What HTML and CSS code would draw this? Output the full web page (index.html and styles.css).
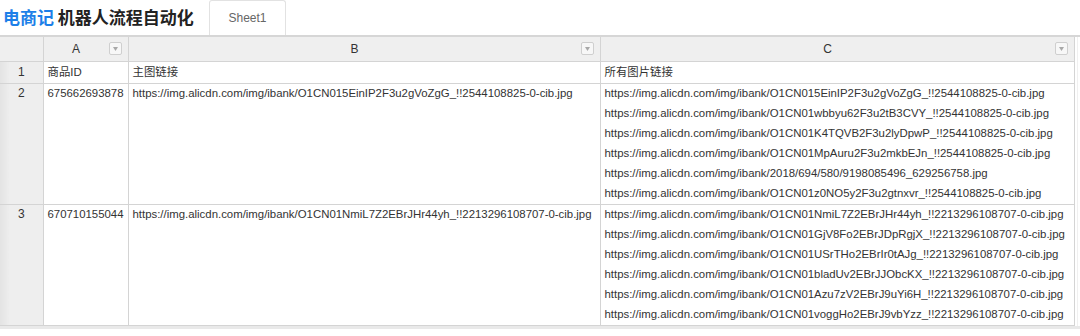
FILE: index.html
```html
<!DOCTYPE html>
<html lang="zh">
<head>
<meta charset="utf-8">
<link rel="stylesheet" href="styles.css">
</head>
<body>
<div class="topbar">
  <div class="brand"><span class="brand-blue">电商记</span> 机器人流程自动化</div>
  <div class="tab">Sheet1</div>
</div>
<div class="sheet">
  <table class="grid">
    <colgroup>
      <col class="c-num"><col class="c-a"><col class="c-b"><col class="c-c">
    </colgroup>
    <thead>
      <tr class="hdr">
        <th class="corner"></th>
        <th><div class="hcell"><span class="hlabel">A</span><span class="fbtn"><svg width="5" height="4" viewBox="0 0 5 4"><path d="M0 0H5L2.5 4Z" fill="#a8a8a8"/></svg></span></div></th>
        <th><div class="hcell"><span class="hlabel">B</span><span class="fbtn"><svg width="5" height="4" viewBox="0 0 5 4"><path d="M0 0H5L2.5 4Z" fill="#a8a8a8"/></svg></span></div></th>
        <th><div class="hcell"><span class="hlabel">C</span><span class="fbtn"><svg width="5" height="4" viewBox="0 0 5 4"><path d="M0 0H5L2.5 4Z" fill="#a8a8a8"/></svg></span></div></th>
      </tr>
    </thead>
    <tbody>
      <tr class="r1">
        <td class="num"><div class="cv">1</div></td>
        <td><div class="cv">商品ID</div></td>
        <td><div class="cv">主图链接</div></td>
        <td><div class="cv">所有图片链接</div></td>
      </tr>
      <tr class="rbig">
        <td class="num"><div class="cv">2</div></td>
        <td><div class="cv">675662693878</div></td>
        <td><div class="cv">https://img.alicdn.com/img/ibank/O1CN015EinIP2F3u2gVoZgG_!!2544108825-0-cib.jpg</div></td>
        <td><div class="cv">https://img.alicdn.com/img/ibank/O1CN015EinIP2F3u2gVoZgG_!!2544108825-0-cib.jpg<br>https://img.alicdn.com/img/ibank/O1CN01wbbyu62F3u2tB3CVY_!!2544108825-0-cib.jpg<br>https://img.alicdn.com/img/ibank/O1CN01K4TQVB2F3u2lyDpwP_!!2544108825-0-cib.jpg<br>https://img.alicdn.com/img/ibank/O1CN01MpAuru2F3u2mkbEJn_!!2544108825-0-cib.jpg<br>https://img.alicdn.com/img/ibank/2018/694/580/9198085496_629256758.jpg<br>https://img.alicdn.com/img/ibank/O1CN01z0NO5y2F3u2gtnxvr_!!2544108825-0-cib.jpg</div></td>
      </tr>
      <tr class="rbig">
        <td class="num"><div class="cv">3</div></td>
        <td><div class="cv">670710155044</div></td>
        <td><div class="cv">https://img.alicdn.com/img/ibank/O1CN01NmiL7Z2EBrJHr44yh_!!2213296108707-0-cib.jpg</div></td>
        <td><div class="cv">https://img.alicdn.com/img/ibank/O1CN01NmiL7Z2EBrJHr44yh_!!2213296108707-0-cib.jpg<br>https://img.alicdn.com/img/ibank/O1CN01GjV8Fo2EBrJDpRgjX_!!2213296108707-0-cib.jpg<br>https://img.alicdn.com/img/ibank/O1CN01USrTHo2EBrIr0tAJg_!!2213296108707-0-cib.jpg<br>https://img.alicdn.com/img/ibank/O1CN01bladUv2EBrJJObcKX_!!2213296108707-0-cib.jpg<br>https://img.alicdn.com/img/ibank/O1CN01Azu7zV2EBrJ9uYi6H_!!2213296108707-0-cib.jpg<br>https://img.alicdn.com/img/ibank/O1CN01voggHo2EBrJ9vbYzz_!!2213296108707-0-cib.jpg</div></td>
      </tr>
    </tbody>
  </table>
  <div class="edge"></div>
</div>
<div class="bottom"></div>
</body>
</html>
```
FILE: styles.css
```css
* { box-sizing: border-box; }
html, body { margin: 0; padding: 0; background: #fff; }
body {
  width: 1080px;
  height: 336px;
  overflow: hidden;
  font-family: "Liberation Sans", "Noto Sans CJK SC", Arial, sans-serif;
  color: #333;
}
.topbar {
  display: flex;
  align-items: stretch;
  height: 35px;
}
.brand {
  width: 209px;
  padding-left: 3px;
  font-size: 17px;
  font-weight: bold;
  line-height: 34px;
  color: #222;
  font-family: "Noto Sans CJK SC", "Liberation Sans", sans-serif;
}
.brand-blue { color: #1c7fe8; }
.tab {
  width: 77px;
  border: 1px solid #e2e2e2;
  border-bottom: none;
  border-radius: 3px 3px 0 0;
  text-align: center;
  font-size: 12px;
  line-height: 34px;
  color: #666;
}
.sheet {
  display: flex;
  border-top: 2px solid #d6d6d6;
}
.grid {
  border-collapse: collapse;
  table-layout: fixed;
  width: 1074px;
  font-size: 11.4px;
}
.c-num { width: 43px; }
.c-a { width: 85px; }
.c-b { width: 472px; }
.c-c { width: 474px; }
.grid th, .grid td {
  border: 1px solid #d4d4d4;
  padding: 0;
}
.grid tr:first-child th { border-top: none; }
.grid th:first-child, .grid td:first-child { border-left: none; }
.hdr { height: 24px; }
.hdr th {
  background: #efefef;
  font-weight: normal;
  color: #333;
  font-size: 12px;
}
.corner { background: #efefef; }
.hcell {
  display: flex;
  align-items: center;
  padding: 0 6px 0 0;
}
.hlabel { flex: 1; text-align: center; }
.fbtn {
  width: 13px;
  height: 13px;
  border: 1px solid #cfcfcf;
  border-radius: 2px;
  background: #f7f7f7;
  display: flex;
  align-items: center;
  justify-content: center;
}
.grid td {
  vertical-align: top;
  padding: 0 4px;
  white-space: nowrap;
  overflow: hidden;
  color: #333;
}
.cv { margin-top: -1px; line-height: 20px; }
.r1 { height: 22px; }
.r1 .cv { margin-top: 0; }
.rbig { height: 121px; }
.grid td.num {
  text-align: center;
  padding: 0;
  background: linear-gradient(to right, #e3e3e3 0px, #eeeeee 10px, #eeeeee 100%);
  color: #333;
  font-size: 12px;
}
.edge {
  flex: 1;
  border-left: 1px solid #f0f0f0;
  margin-left: 2px;
}
.bottom {
  height: 3px;
  background: #e9e9e9;
}
```
